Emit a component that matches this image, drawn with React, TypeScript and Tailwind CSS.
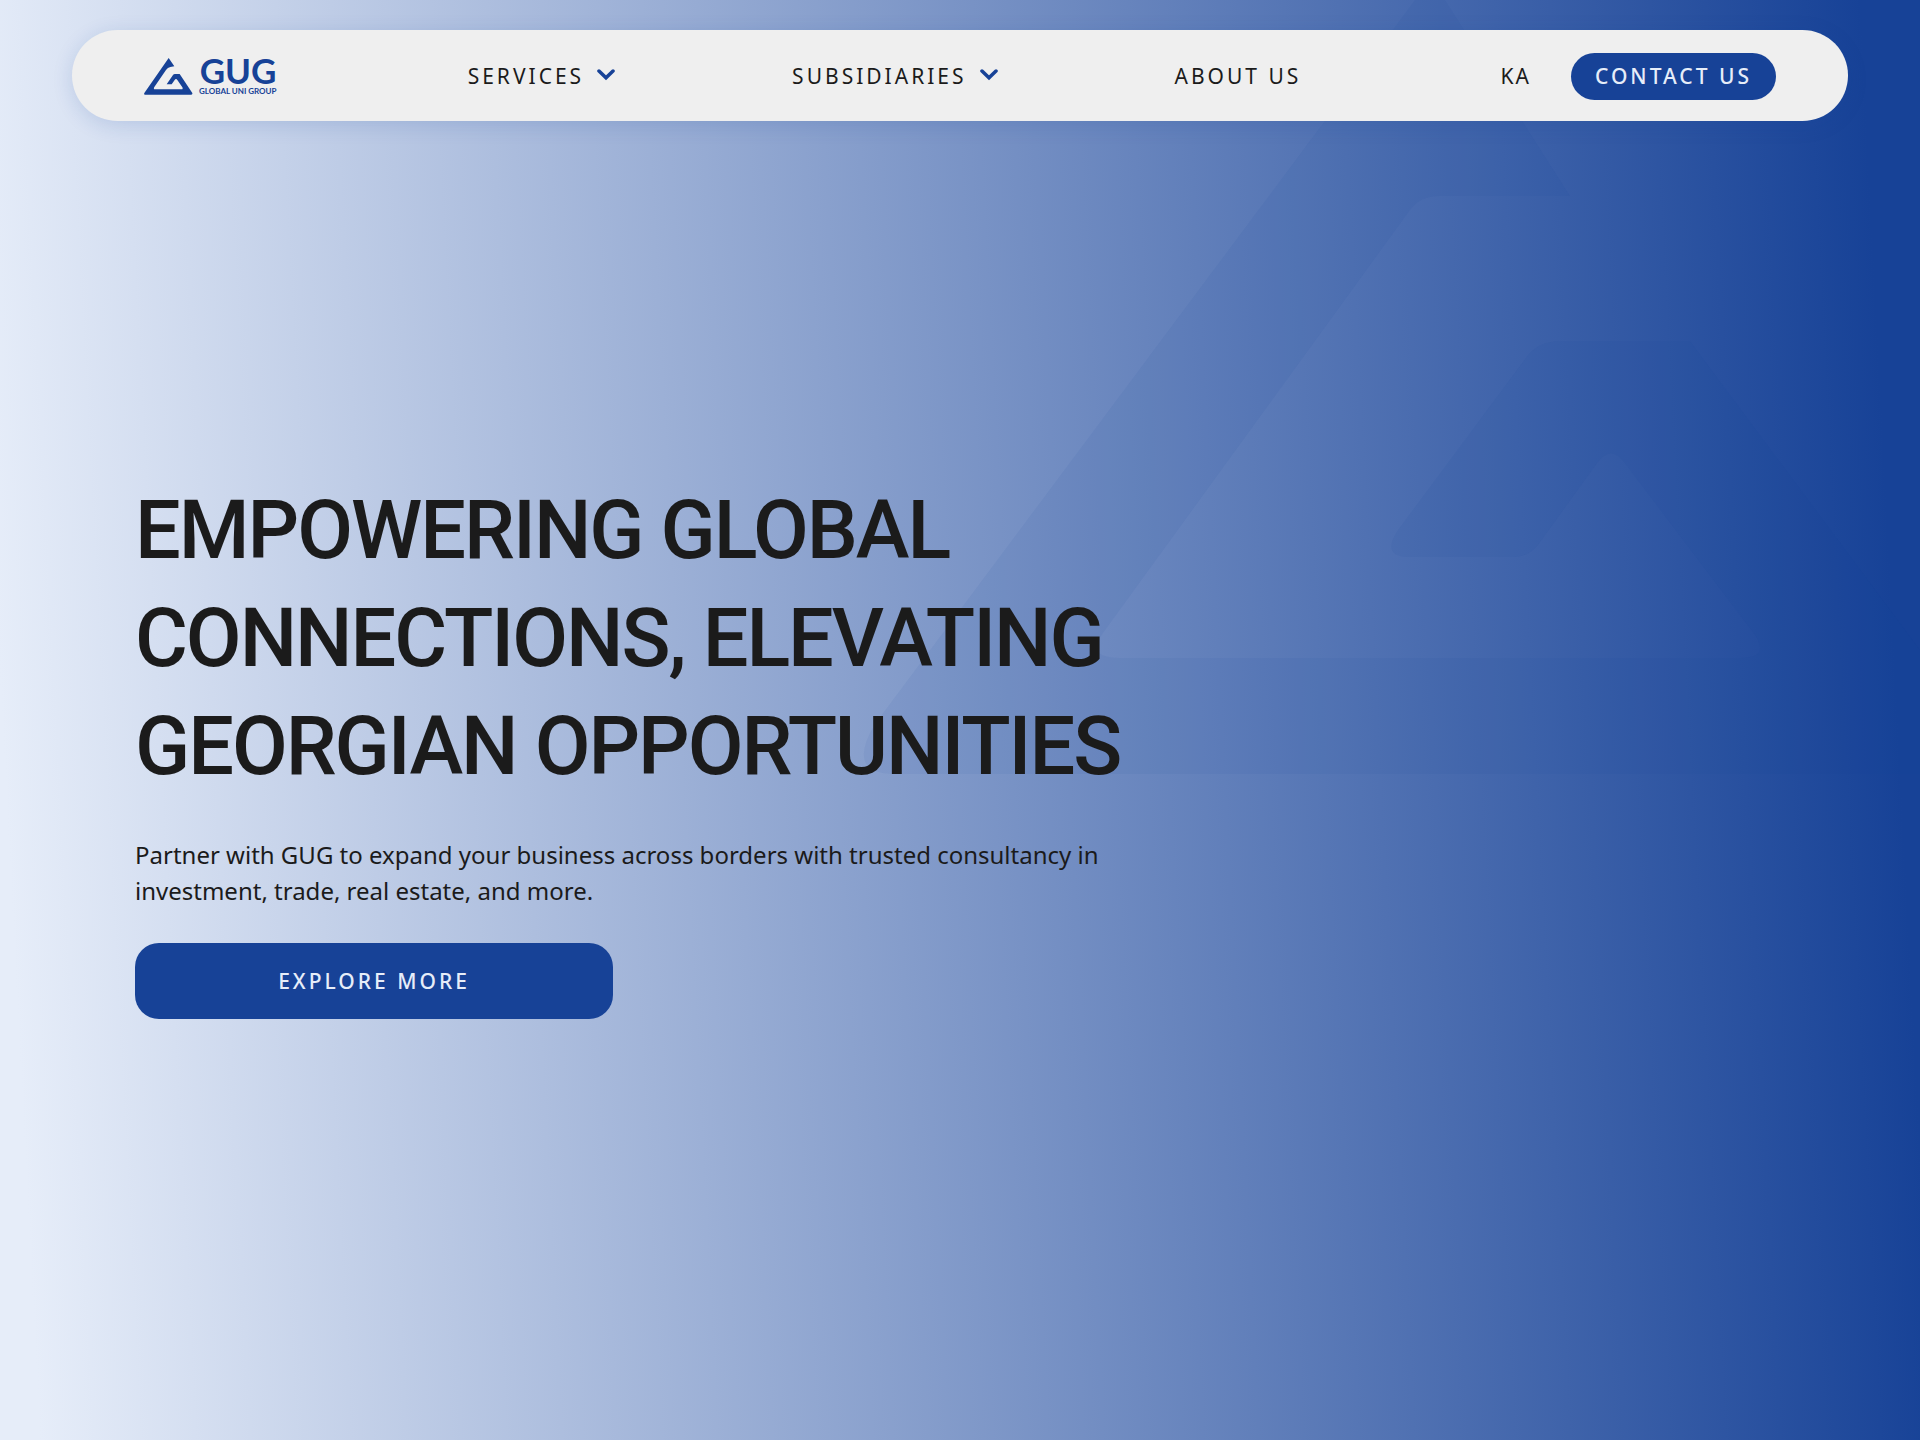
function Logo() {
	return (
		<a href="#" className="flex shrink-0 gap-1.5 text-[#174297]">
			<svg
				className="h-[37px] w-[49px]"
				viewBox="0 0 147 111"
				fill="currentColor"
				aria-hidden="true"
			>
				<path d="M74 0 L91 25 L79 27 Q71 28 66 36 L31 87 Q27 94 34 94 H112 Q118 94 115 88 L100 66 Q96 60 92 66 L83 79 H68 L87 51 Q89 48 93 48 H107 L145 105 Q146 110 142 110 H3 Q-1 110 1 105 Z" />
			</svg>
			<span className="flex h-[37px] flex-col items-end font-['Lato',sans-serif] font-bold">
				<span className="text-[35px] leading-6">GUG</span>
				<span className="text-[8px] leading-[18px]">GLOBAL UNI GROUP</span>
			</span>
		</a>
	);
}

function Chevron() {
	return (
		<svg
			className="mb-1 h-3 w-5"
			viewBox="0 0 20 12"
			fill="none"
			stroke="#174297"
			strokeWidth="3.5"
			strokeLinecap="round"
			aria-hidden="true"
		>
			<path d="M3 2 L10 8.800 L17 2" />
		</svg>
	);
}

export default function App() {
	return (
		<div className="relative flex min-h-screen flex-col overflow-hidden bg-[linear-gradient(87deg,#e6edf9_2%,#174297_97%)] px-[72px] pt-[30px] font-['Noto_Sans',sans-serif] text-[#1b1b1b]">
			{/* watermark */}
			<svg
				className="absolute top-0 right-0 h-[774px] w-[1120px]"
				viewBox="0 0 1120 774"
				fill="#174297"
				fillOpacity="0.06"
				aria-hidden="true"
			>
				<path d="M615 0 L75 724 Q45 774 95 774 H1120 V650 L890 341 H760 Q740 341 728 355 L598 530 Q580 557 610 557 H715 Q728 557 738 545 L798 462 Q811 445 824 462 L955 635 Q970 658 940 658 H320 Q285 658 303 633 L610 210 Q620 196 640 196 H770 L645 0 Z" />
			</svg>

			<header className="relative flex h-[91px] items-center justify-between rounded-[46px] bg-[#efefef] px-[72px] pt-0.5 text-[21px] shadow-[0_4px_20px_rgba(23,66,151,0.15)]">
				<Logo />
				<nav className="mr-2 flex items-center gap-44">
					<button className="flex items-center gap-3 tracking-[3px]">
						SERVICES
						<Chevron />
					</button>
					<button className="flex items-center gap-3 tracking-[3px]">
						SUBSIDIARIES
						<Chevron />
					</button>
					<a href="#" className="tracking-[3px]">ABOUT US</a>
				</nav>
				<div className="flex items-center gap-10">
					<button className="tracking-[2px]">KA</button>
					<a
						href="#"
						className="flex h-[47px] items-center rounded-full bg-[#174297] px-6 font-medium tracking-[3px] text-[#e6edf9]"
					>
						CONTACT US
					</a>
				</div>
			</header>

			<main className="relative flex flex-1 flex-col items-start px-[63px] pt-[356px]">
				<h1 className="max-w-[1040px] font-['Roboto',sans-serif] text-[81px] leading-[108px] font-medium tracking-tight">
					EMPOWERING GLOBAL CONNECTIONS, ELEVATING GEORGIAN OPPORTUNITIES
				</h1>
				<p className="mt-9 max-w-[1000px] text-2xl leading-9">
					Partner with GUG to expand your business across borders with trusted
					consultancy in investment, trade, real estate, and more.
				</p>
				<button className="mt-[34px] h-[76px] w-[478px] rounded-3xl bg-[#174297] pt-0.5 text-[21px] font-medium tracking-[3px] text-[#e6edf9]">
					EXPLORE MORE
				</button>
			</main>
		</div>
	);
}
